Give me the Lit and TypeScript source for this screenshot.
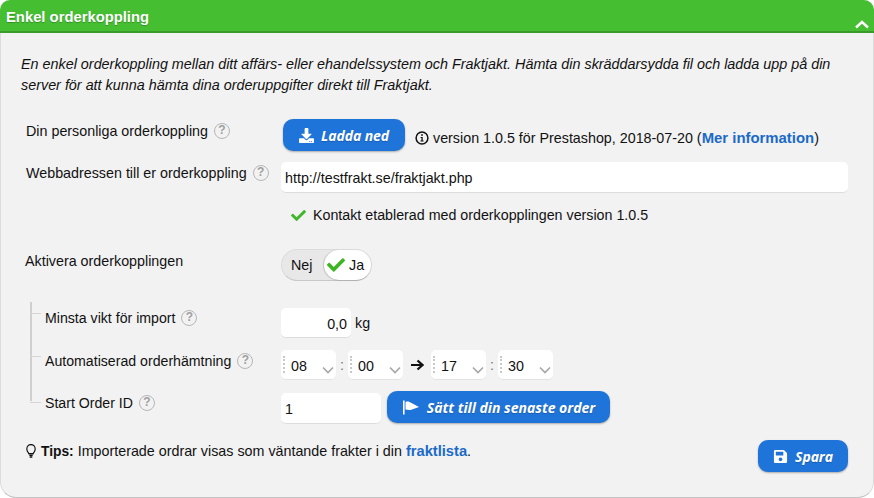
import { LitElement, html, css, svg } from "lit";
import { customElement } from "lit/decorators.js";

const CHECK = "M173.898 439.404l-166.4-166.4c-9.997-9.997-9.997-26.206 0-36.204l36.203-36.204c9.997-9.998 26.207-9.998 36.204 0L192 312.69 432.095 72.596c9.997-9.997 26.207-9.997 36.204 0l36.203 36.204c9.997 9.997 9.997 26.206 0 36.204l-294.4 294.401c-9.998 9.997-26.207 9.997-36.204-.001z";
const DOWNLOAD = "M216 0h80c13.3 0 24 10.7 24 24v168h87.7c17.8 0 26.7 21.5 14.1 34.1L269.7 378.3c-7.5 7.5-19.8 7.5-27.3 0L90.1 226.1c-12.6-12.6-3.7-34.1 14.1-34.1H192V24c0-13.3 10.7-24 24-24zm296 376v112c0 13.3-10.7 24-24 24H24c-13.3 0-24-10.7-24-24V376c0-13.3 10.7-24 24-24h146.7l49 49c20.1 20.1 52.5 20.1 72.6 0l49-49H488c13.3 0 24 10.7 24 24zm-124 88c0-11-9-20-20-20s-20 9-20 20 9 20 20 20 20-9 20-20zm64 0c0-11-9-20-20-20s-20 9-20 20 9 20 20 20 20-9 20-20z";
const SAVE = "M433.941 129.941l-83.882-83.882A48 48 0 0 0 316.118 32H48C21.49 32 0 53.49 0 80v352c0 26.51 21.49 48 48 48h352c26.51 0 48-21.49 48-48V163.882a48 48 0 0 0-14.059-33.941zM224 416c-35.346 0-64-28.654-64-64 0-35.346 28.654-64 64-64s64 28.654 64 64c0 35.346-28.654 64-64 64zm96-304.52V212c0 6.627-5.373 12-12 12H76c-6.627 0-12-5.373-12-12V108c0-6.627 5.373-12 12-12h228.52c3.183 0 6.235 1.264 8.485 3.515l3.48 3.48A11.996 11.996 0 0 1 320 111.48z";

const help = html`<span class="help">?</span>`;

const select = (v: string) => html`<span class="sel"><span class="dots"></span><span class="val">${v}</span>
  <svg class="chev" viewBox="0 0 12 8" width="12" height="8"><path d="M1 1.5 L6 6.5 L11 1.5" fill="none" stroke="#a8a8a8" stroke-width="1.7"/></svg></span>`;

@customElement("app-root")
export class AppRoot extends LitElement {
  static styles = css`
    :host { display: block; width: 874px; height: 498px; background: #fff; overflow: hidden;
      font-family: "Liberation Sans", Arial, sans-serif; font-size: 14.3px; color: #111; }
    .panel { box-sizing: border-box; height: 498px; background: #f2f2f2; border-radius: 10px 10px 16px 16px;
      border-bottom: 1px solid #c4c4c4; border-right: 1px solid #dcdcdc; border-left: 1px solid #dcdcdc; display: flex; flex-direction: column; }
    .head { box-sizing: border-box; height: 33px; margin: 0 -1px; background: #45bf31; border-bottom: 2px solid #3a9a2b;
      border-radius: 10px 10px 0 0; display: flex; justify-content: space-between; padding: 9px 5px 0 6px; flex: none; }
    .title { color: #fff; font-weight: 700; font-size: 14.8px; line-height: 16px; text-shadow: 0 1px 1px rgba(0,0,0,.25); }
    .caret { margin-top: 11px; }
    .body { flex: 1; display: flex; flex-direction: column; padding: 0 25px 0 20px; }
    .intro { margin: 21px 0 0 0; font-size: 14.36px; font-style: italic; line-height: 21px; width: 820px; }
    .row { display: grid; grid-template-columns: 260px 1fr; align-items: start; }
    .lab { display: flex; align-items: center; gap: 6px; height: 22px; line-height: 22px; white-space: nowrap; padding-left: 5px; }
    .help { box-sizing: border-box; width: 16px; height: 16px; border: 1.5px solid #b6b6b6; border-radius: 50%; color: #a0a0a0;
      font-size: 12px; font-weight: 700; line-height: 13px; text-align: center; flex: none; }
    .r1 { margin-top: 23px; height: 32px; }
    .r1 .lab { margin-top: 1px; }
    .r2 { margin-top: 11px; }
    .r3 { margin-top: 11px; height: 22px; }
    .r4 { margin-top: 23px; }
    .r4 .lab { padding-left: 4px; margin-top: 1px; }
    .ctrl { display: flex; align-items: center; }
    .btn { box-sizing: border-box; display: inline-flex; align-items: center; justify-content: center; gap: 7px; height: 32px;
      background: #1f74d9; border-radius: 10px; color: #fff; font-family: "Open Sans", sans-serif; font-weight: 700; font-style: italic;
      font-size: 14px; letter-spacing: -.1px; box-shadow: 0 1px 2px rgba(0,0,0,.3); text-shadow: 0 1px 1px rgba(0,0,0,.2); white-space: nowrap; }
    .btn svg { fill: #fff; flex: none; }
    .load { width: 122px; margin-left: 2px; }
    .info { display: inline-flex; align-items: center; gap: 4px; margin-left: 10px; margin-top: 6px; white-space: nowrap; }
    a { color: #1b6ac9; font-weight: 700; font-size: 14.9px; text-decoration: none; }
    .tips a { font-size: 14.7px; }
    b { font-size: 13.8px; }
    .inp { box-sizing: border-box; background: #fff; border-radius: 5px; border-bottom: 1px solid #dcdcdc; height: 31px; line-height: 33px; padding: 0 4px; }
    .url { width: 567px; }
    .ok { display: flex; align-items: center; gap: 7px; padding-left: 10px; line-height: 22px; font-size: 14.25px; }
    .toggle { box-sizing: border-box; display: flex; width: 91px; height: 32px; background: #e8e8e8; border-radius: 16px; border: 1px solid #dcdcdc; border-bottom: 1.5px solid #c8c8c8; }
    .no { width: 42px; padding-left: 9px; line-height: 30px; box-sizing: border-box; }
    .yes { flex: 1; background: #fff; border-radius: 16px; display: flex; align-items: center; gap: 4px; padding-left: 3px; box-shadow: -1px 0 1px rgba(0,0,0,.15), 0 1px 1px rgba(0,0,0,.1); }
    .tree { margin-top: 21px; display: flex; flex-direction: column; position: relative; margin-left: 4px; }
    .tree::before { content: ""; position: absolute; left: 5px; top: 0; width: 2px; height: 99px; background: #cfcfcf; }
    .sub { display: grid; grid-template-columns: 256px 1fr; position: relative; align-items: start; }
    .sub::before { content: ""; position: absolute; left: 5px; width: 11px; height: 1px; background: #d6d6d6; }
    .sub .lab { padding-left: 20px; font-size: 14.15px; }
    .s1 { margin-top: 5px; }
    .s1::before { top: 6px; }
    .s2 { margin-top: 12px; }
    .s2::before { top: 6px; }
    .s3 { margin-top: 13px; }
    .s3::before { top: 9px; }
    .s3 .lab { margin-top: -1px; }
    .weight { width: 70px; text-align: right; padding-right: 4px; height: 30px; line-height: 32px; margin-top: 1px; }
    .unit { margin-left: 4px; margin-top: 1px; }
    .times { display: flex; align-items: center; }
    .sel { box-sizing: border-box; position: relative; width: 55px; height: 30px; background: #fff; border-radius: 5px; border-bottom: 1px solid #e2e2e2;
      display: flex; align-items: center; padding-left: 10px; }
    .val { padding-top: 2px; }
    .dots { position: absolute; left: 2px; top: 6px; height: 17px; border-left: 2px dotted #c8c8c8; }
    .chev { position: absolute; right: 2px; top: 16px; }
    .colon { width: 12px; text-align: center; color: #777; }
    .arrow { width: 28px; display: flex; justify-content: center; }
    .idrow { display: flex; align-items: flex-start; gap: 6px; }
    .id { width: 100px; height: 31px; }
    .set { width: 223px; margin-top: -2px; letter-spacing: 0; }
    .foot { display: flex; justify-content: space-between; align-items: flex-start; margin-top: 16px; margin-left: 4px; }
    .tips { display: flex; align-items: center; gap: 5px; line-height: 22px; }
    .bulb { margin-left: 1px; }
    .save { width: 90px; }
  `;

  render() {
    return html`<div class="panel">
      <div class="head">
        <span class="title">Enkel orderkoppling</span>
        <svg class="caret" width="14" height="9" viewBox="0 0 14 9"><path d="M1 7.5 L7 2 L13 7.5" fill="none" stroke="#fff" stroke-width="2.4"/></svg>
      </div>
      <div class="body">
        <p class="intro">En enkel orderkoppling mellan ditt affärs- eller ehandelssystem och Fraktjakt. Hämta din skräddarsydda fil och ladda upp på din server för att kunna hämta dina orderuppgifter direkt till Fraktjakt.</p>

        <div class="row r1">
          <div class="lab">Din personliga orderkoppling ${help}</div>
          <div class="ctrl">
            <span class="btn load"><svg width="15" height="15" viewBox="0 0 512 512">${svg`<path d=${DOWNLOAD}/>`}</svg>Ladda ned</span>
            <span class="info">
              <svg width="14" height="14" viewBox="0 0 14 14"><circle cx="7" cy="7" r="5.9" fill="none" stroke="#111" stroke-width="1.5"/><rect x="6.2" y="3.2" width="1.6" height="1.6" fill="#111"/><path d="M5.6 6h2.1v3.6h.9v1H5.5v-1h.9V7h-.8z" fill="#111"/></svg>
              <span>version 1.0.5 för Prestashop, 2018-07-20 (<a>Mer information</a>)</span>
            </span>
          </div>
        </div>

        <div class="row r2">
          <div class="lab">Webbadressen till er orderkoppling ${help}</div>
          <div class="inp url">http://testfrakt.se/fraktjakt.php</div>
        </div>

        <div class="row r3">
          <div></div>
          <div class="ok">
            <svg width="15" height="15" viewBox="0 0 512 512" fill="#3fb62c">${svg`<path d=${CHECK}/>`}</svg>
            <span>Kontakt etablerad med orderkopplingen version 1.0.5</span>
          </div>
        </div>

        <div class="row r4">
          <div class="lab">Aktivera orderkopplingen</div>
          <div class="toggle">
            <span class="no">Nej</span>
            <span class="yes">
              <svg width="18" height="18" viewBox="0 0 512 512" fill="#3cb521">${svg`<path d=${CHECK}/>`}</svg>
              <span>Ja</span>
            </span>
          </div>
        </div>

        <div class="tree">
          <div class="sub s1">
            <div class="lab">Minsta vikt för import ${help}</div>
            <div class="ctrl"><div class="inp weight">0,0</div><span class="unit">kg</span></div>
          </div>
          <div class="sub s2">
            <div class="lab">Automatiserad orderhämtning ${help}</div>
            <div class="times">
              ${select("08")}<span class="colon">:</span>${select("00")}
              <span class="arrow"><svg width="14" height="12" viewBox="0 0 14 12"><path d="M1 6 H12 M7.5 1.5 L12.5 6 L7.5 10.5" fill="none" stroke="#111" stroke-width="2.2"/></svg></span>
              ${select("17")}<span class="colon">:</span>${select("30")}
            </div>
          </div>
          <div class="sub s3">
            <div class="lab">Start Order ID ${help}</div>
            <div class="idrow">
              <div class="inp id">1</div>
              <span class="btn set"><svg width="18" height="15" viewBox="0 0 18 15"><rect x="1" y="0.5" width="1.6" height="14"/><path d="M3.5 2 C6 1 7.5 2 9.5 3 L17 7 L10 9.5 C7.5 10.3 6 10 3.5 9.5 Z"/></svg>Sätt till din senaste order</span>
            </div>
          </div>
        </div>

        <div class="foot">
          <div class="tips">
            <svg class="bulb" width="10" height="15" viewBox="0 0 12 15" preserveAspectRatio="none"><path d="M3.4 9.8 C2.8 8.4 1 7.4 1 5 A5 4.4 0 0 1 11 5 C11 7.4 9.2 8.4 8.6 9.8 Z" fill="none" stroke="#111" stroke-width="1.4"/><path d="M4 11.3 H8 M4.4 13 H7.6" stroke="#111" stroke-width="1.3"/></svg>
            <span><b>Tips:</b> Importerade ordrar visas som väntande frakter i din <a>fraktlista</a>.</span>
          </div>
          <span class="btn save"><svg width="15" height="15" viewBox="0 0 448 512">${svg`<path d=${SAVE}/>`}</svg>Spara</span>
        </div>
      </div>
    </div>`;
  }
}
